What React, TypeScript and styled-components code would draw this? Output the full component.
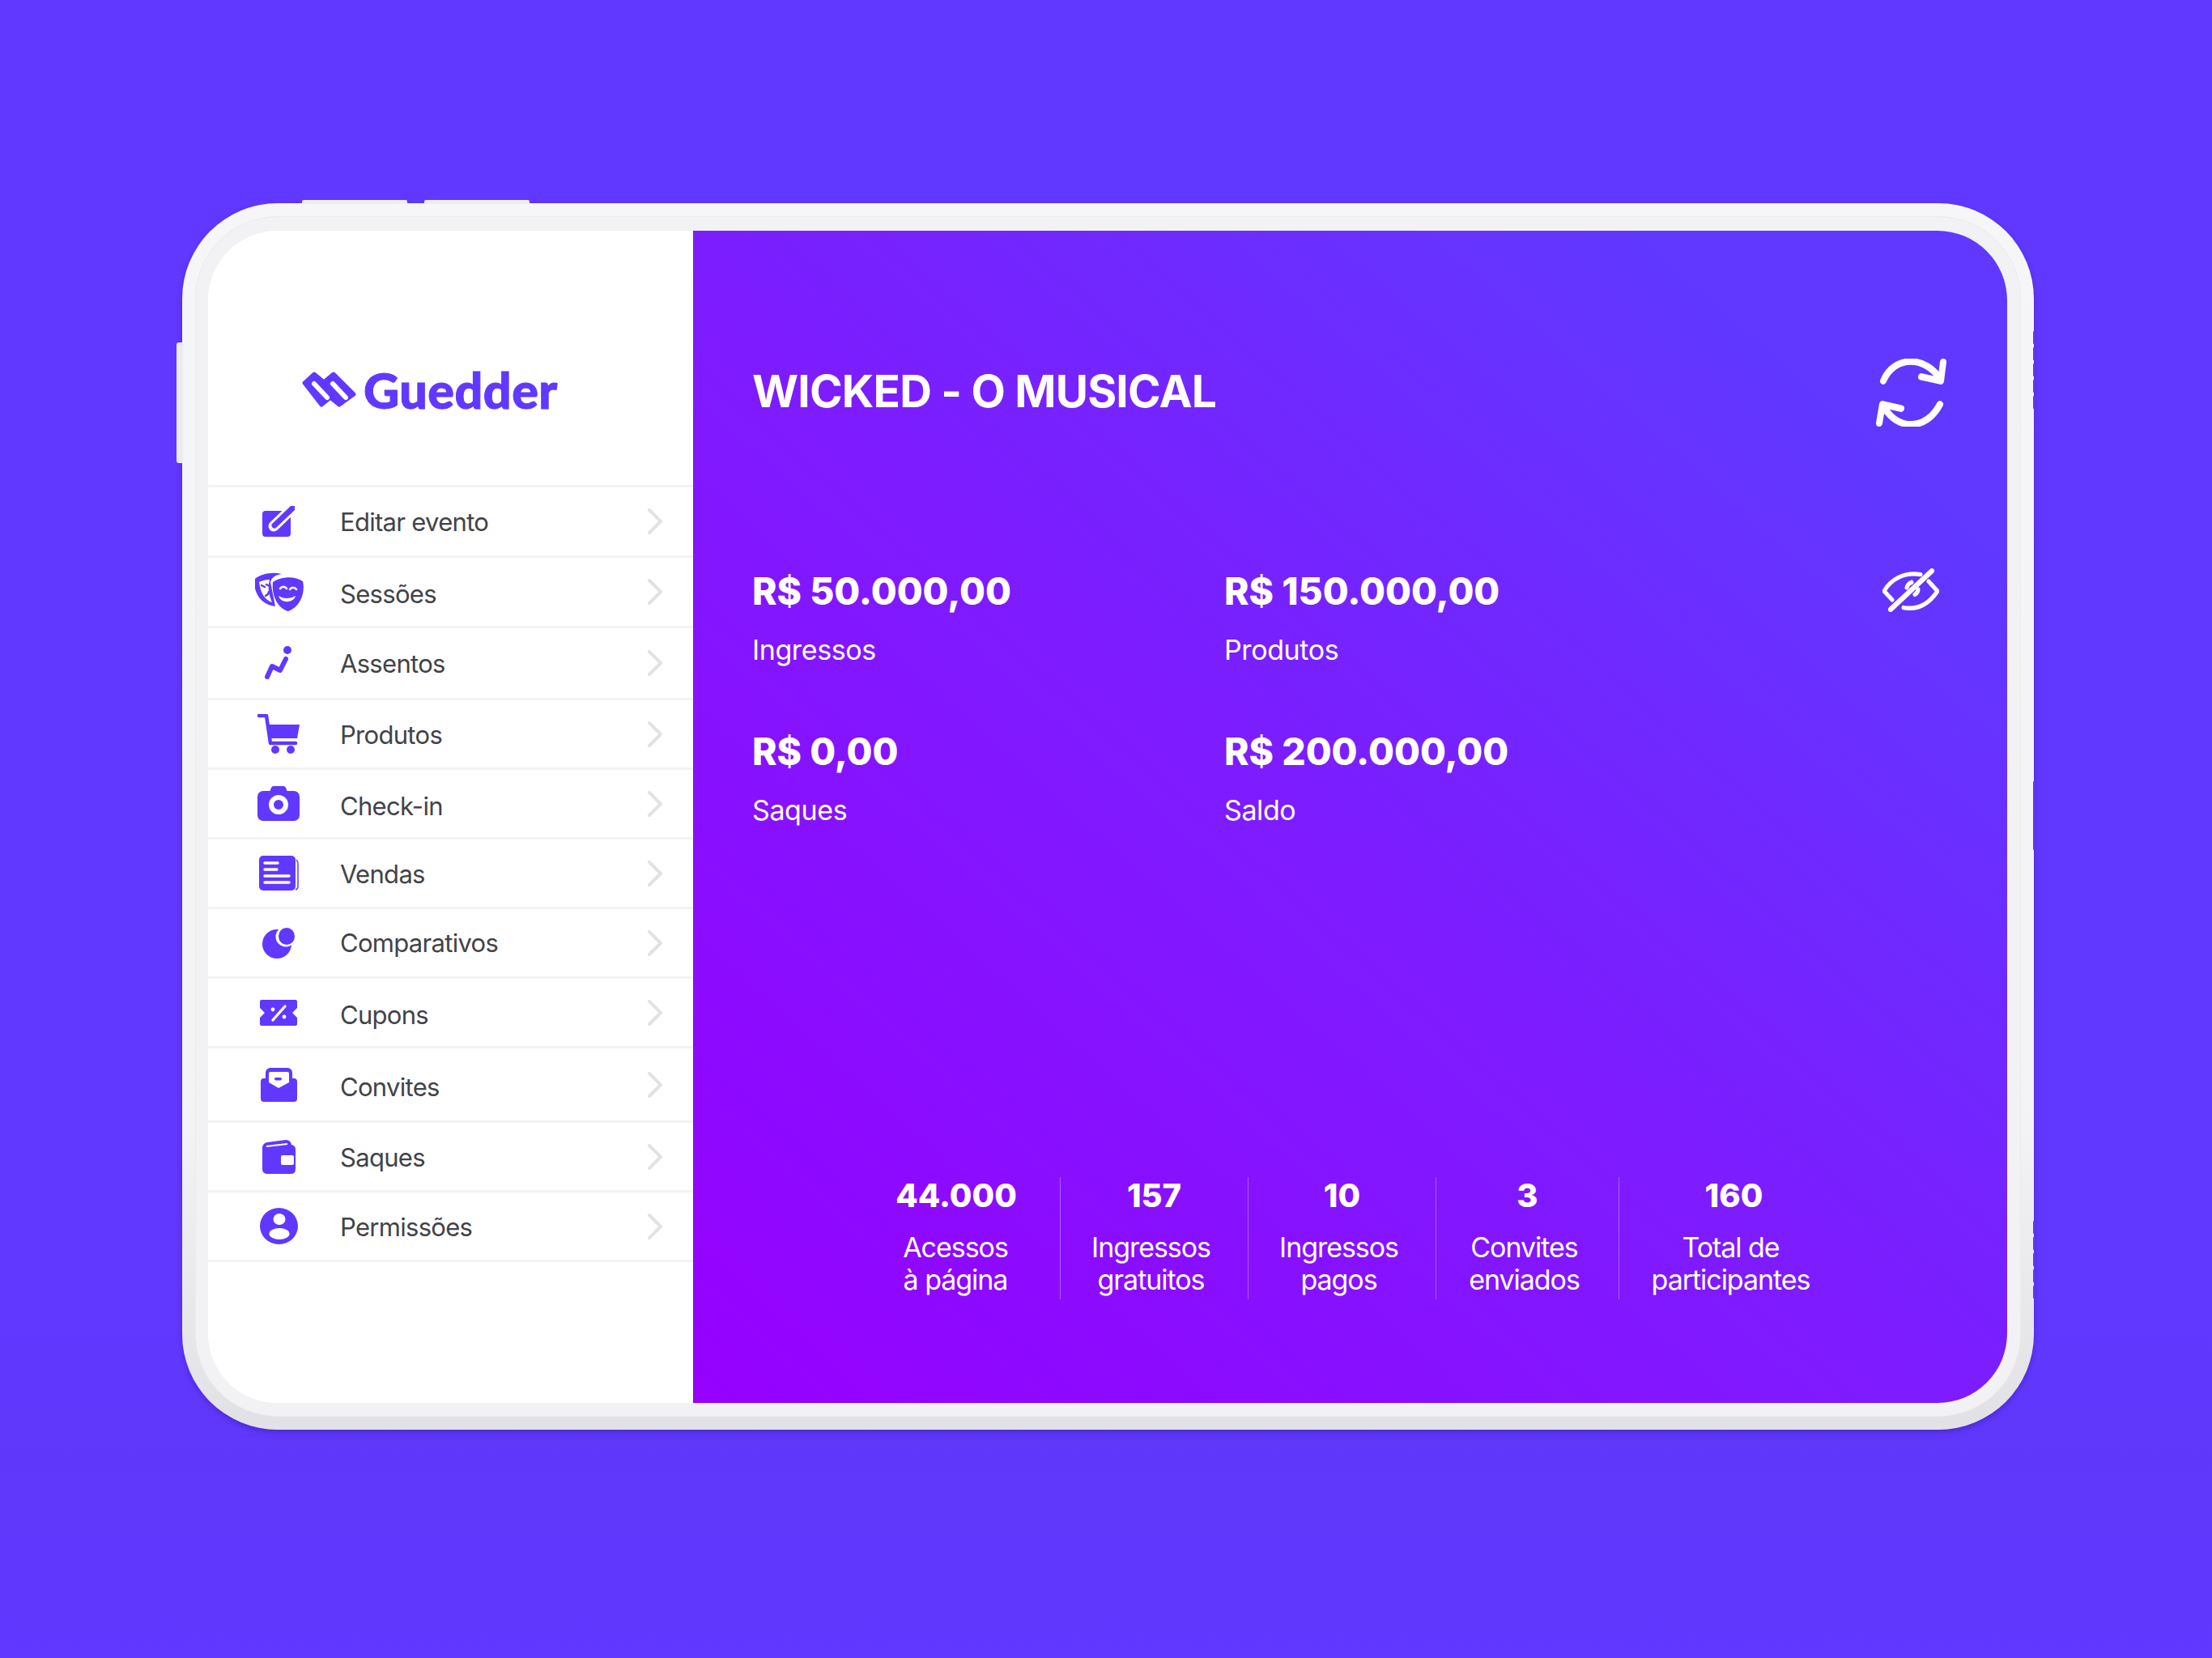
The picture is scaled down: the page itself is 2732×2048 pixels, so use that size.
import React from 'react';
import styled, { createGlobalStyle } from 'styled-components';

const PURPLE = '#6038ff';

const GlobalStyle = createGlobalStyle`
  html, body {
    margin: 0;
    background: ${PURPLE};
    font-family: Inter, "Liberation Sans", sans-serif;
  }
  * { box-sizing: border-box; }
`;

const Page = styled.div`
  width: 2732px;
  height: 2048px;
  padding: 251px 0 0 225px;
  background: linear-gradient(#6038ff 80%, #5e37fa 88%, #6038ff);
  overflow: hidden;
`;

const Device = styled.div`
  position: relative;
  width: 2287px;
  height: 1515px;
  padding: 34px 33px 33px 32px;
  border-radius: 118px;
  background: linear-gradient(#f6f6f8 0%, #f3f3f5 75%, #e2e2e6 99%);
  box-shadow: 0 3px 6px rgba(40, 20, 130, 0.35);

  &::before {
    content: '';
    position: absolute;
    inset: 16px;
    border-radius: 102px;
    background: #f2f2f4;
    border: 1px solid #ebebee;
  }
`;

const TopButton = styled.span<{ $left: number }>`
  position: absolute;
  top: -4px;
  left: ${(p) => p.$left}px;
  width: 130px;
  height: 5px;
  border-radius: 2px 2px 0 0;
  background: #eeeef1;
`;

const SideButton = styled.span`
  position: absolute;
  left: -7px;
  top: 172px;
  width: 8px;
  height: 149px;
  border-radius: 3px 0 0 3px;
  background: #ececef;
`;

const EdgeNotch = styled.span<{ $top: number; $h: number }>`
  position: absolute;
  right: -1px;
  top: ${(p) => p.$top}px;
  width: 2px;
  height: ${(p) => p.$h}px;
  border-radius: 1px;
  background: ${PURPLE};
`;

const Screen = styled.div`
  position: relative;
  display: grid;
  grid-template-columns: 599px 1fr;
  height: 100%;
  border-radius: 86px;
  overflow: hidden;
  background: #fff;
`;

const Sidebar = styled.aside`
  background: #fff;
`;

const LogoBar = styled.div`
  display: flex;
  align-items: center;
  gap: 8px;
  height: 314px;
  padding: 78px 0 0 116px;
`;

const LogoText = styled.span`
  font-family: Lato, Inter, sans-serif;
  font-size: 61px;
  font-weight: 900;
  line-height: 1;
  letter-spacing: 0.5px;
  color: ${PURPLE};
  -webkit-text-stroke: 1px ${PURPLE};
`;

const MenuList = styled.nav`
  display: flex;
  flex-direction: column;
  border-top: 3px solid #f3f3f5;
`;

const MenuRow = styled.div<{ $h: number }>`
  display: flex;
  align-items: center;
  height: ${(p) => p.$h}px;
  padding: 0 38px 0 42px;
  border-bottom: 3px solid #f3f3f5;
`;

const IconSlot = styled.span`
  display: flex;
  align-items: center;
  justify-content: center;
  width: 90px;
  margin-right: 31px;
`;

const MenuLabel = styled.span<{ $drop: number }>`
  margin-top: ${(p) => p.$drop}px;
  font-size: 31px;
  line-height: 40px;
  letter-spacing: -0.7px;
  color: #434347;
`;

const Chevron = styled.svg`
  margin-left: auto;
  fill: none;
  stroke: #e2e2e4;
  stroke-width: 4;
  stroke-linecap: round;
  stroke-linejoin: round;
`;

const Main = styled.main`
  display: flex;
  flex-direction: column;
  padding: 0 74px 128px 73px;
  color: #fff;
  background: linear-gradient(to top right, #9600ff 0%, #7d1cff 48%, #6038ff 86%);
`;

const Header = styled.header`
  display: flex;
  justify-content: space-between;
  align-items: flex-start;
  height: 415px;
  padding-top: 168px;
`;

const Title = styled.h1`
  margin: 0;
  font-size: 55px;
  font-weight: 700;
  line-height: 60px;
  letter-spacing: -0.8px;
`;

const LineIcon = styled.svg<{ $mt: number; $mr?: number }>`
  flex: none;
  margin-top: ${(p) => p.$mt}px;
  margin-right: ${(p) => p.$mr ?? 0}px;
  margin-left: auto;
  fill: none;
  stroke: #fff;
  stroke-linecap: round;
  stroke-linejoin: round;
`;

const BalanceRow = styled.div`
  display: flex;
  align-items: flex-start;
  margin-bottom: 75px;
`;

const BalanceCell = styled.div`
  width: 583px;
`;

const BalanceValue = styled.div`
  font-size: 46.2px;
  font-weight: 800;
  line-height: 60px;
  margin-bottom: 23px;
`;

const BalanceLabel = styled.div`
  font-size: 34px;
  line-height: 40px;
  letter-spacing: -0.4px;
`;

const Stats = styled.section`
  display: grid;
  grid-template-columns: 256px 232px 232px 226px 284px;
  margin: auto 0 0 124px;
`;

const StatCell = styled.div<{ $first?: boolean }>`
  height: 151px;
  text-align: center;
  border-left: ${(p) => (p.$first ? 'none' : '1px solid rgba(255, 255, 255, 0.32)')};
`;

const StatNumber = styled.div`
  font-size: 40px;
  font-weight: 800;
  line-height: 46px;
  margin-bottom: 21px;
`;

const StatLabel = styled.div<{ $first?: boolean }>`
  padding-right: ${(p) => (p.$first ? 2 : 8)}px;
  font-size: 34px;
  line-height: 40px;
  letter-spacing: -1.05px;
`;

const Glyph = styled.svg`
  display: block;
  fill: ${PURPLE};
`;

const W = '#fff';

const LogoMark = () => (
  <Glyph width="68" height="44" viewBox="0 0 68 44">
    <path
      d="M15 3 L27 13 L39 3 L64 28 L46 41 L35 32 L24 41 L3 14 Z"
      stroke={PURPLE}
      strokeWidth="5"
      strokeLinejoin="round"
    />
    <path d="M15 15 L31 32 M38 15 L54 32" stroke={W} strokeWidth="6" strokeLinecap="round" />
  </Glyph>
);

const EditIcon = () => (
  <Glyph width="40" height="38" viewBox="0 0 40 38">
    <rect x="0" y="6" width="35" height="32" rx="4" />
    <path d="M38 2 L14 25" stroke={W} strokeWidth="13" strokeLinecap="round" />
    <path d="M38 2 L15 24" stroke={PURPLE} strokeWidth="7" strokeLinecap="round" />
  </Glyph>
);

const MasksIcon = () => (
  <Glyph width="61" height="48" viewBox="0 0 61 48">
    <path d="M1 8 C8 2 22 -1 34 2 C26 3 22 6 20 12 L26 42 C12 40 4 32 1 20 Z" />
    <path d="M6 12 C10 10 14 9 19 9 L18 14 C17 22 19 30 22 37 C13 34 8 26 6 12 Z" fill={W} />
    <path
      d="M9 16 L13 18 M15 15 L19 17 M14 29 C16 28 18 26 18 24"
      stroke={PURPLE}
      strokeWidth="2.5"
      fill="none"
      strokeLinecap="round"
    />
    <path d="M23 12 C33 5 50 4 60 11 C63 24 58 42 42 48 C30 45 21 30 23 12 Z" />
    <path
      d="M32 20 C34 17 38 17 40 20 M44 21 C46 18 50 18 52 21"
      stroke={W}
      strokeWidth="2.6"
      fill="none"
      strokeLinecap="round"
    />
    <path d="M30 29 C36 33 44 33 51 29 C49 38 33 39 30 29 Z" fill={W} />
  </Glyph>
);

const SeatIcon = () => (
  <Glyph width="34" height="42" viewBox="0 0 34 42">
    <circle cx="28" cy="5" r="5" />
    <path
      d="M3 38 L9 25 L19 30 L26 16"
      fill="none"
      stroke={PURPLE}
      strokeWidth="6"
      strokeLinecap="round"
      strokeLinejoin="round"
    />
  </Glyph>
);

const CartIcon = () => (
  <Glyph width="52" height="49" viewBox="0 0 52 49">
    <path
      d="M2 2 H11 L16 36 H47"
      fill="none"
      stroke={PURPLE}
      strokeWidth="4.5"
      strokeLinecap="round"
      strokeLinejoin="round"
    />
    <path d="M13 13 H52 L49 30 H15 Z" />
    <circle cx="22" cy="44" r="5" />
    <circle cx="41" cy="44" r="5" />
  </Glyph>
);

const CameraIcon = () => (
  <Glyph width="52" height="43" viewBox="0 0 52 43">
    <rect x="0" y="6" width="52" height="37" rx="7" />
    <path d="M14 10 L17 2 Q18 0 20 0 H32 Q34 0 35 2 L38 10 Z" />
    <circle cx="26" cy="23" r="9" stroke={W} strokeWidth="6" />
  </Glyph>
);

const SalesIcon = () => (
  <Glyph width="49" height="43" viewBox="0 0 49 43">
    <rect x="0" y="0" width="45" height="43" rx="5" />
    <path d="M46 5 Q48 7 48 10 V38 Q48 41 45 42" fill="none" stroke={PURPLE} strokeWidth="1.5" />
    <path d="M7 9 H23 M7 17 H22 M7 25 H37 M7 33 H37" stroke={W} strokeWidth="3.4" strokeLinecap="round" />
  </Glyph>
);

const PieIcon = () => (
  <Glyph width="40" height="38" viewBox="0 0 40 38">
    <circle cx="18" cy="20" r="18" />
    <circle cx="29" cy="11" r="12.5" fill={W} />
    <ellipse cx="30" cy="10.5" rx="10" ry="10.5" />
  </Glyph>
);

const TicketIcon = () => (
  <Glyph width="46" height="32" viewBox="0 0 46 32">
    <path d="M2 0 H44 Q46 0 46 2 V10 L40 16 L46 22 V30 Q46 32 44 32 H2 Q0 32 0 30 V22 L6 16 L0 10 V2 Q0 0 2 0 Z" />
    <path d="M16 25 L31 8" stroke={W} strokeWidth="3.4" strokeLinecap="round" />
    <circle cx="16" cy="12" r="2.4" fill={W} />
    <circle cx="30" cy="21" r="2.4" fill={W} />
  </Glyph>
);

const InviteIcon = () => (
  <Glyph width="45" height="42" viewBox="0 0 45 42">
    <rect x="6" y="0" width="33" height="24" rx="6" />
    <rect x="0" y="13" width="45" height="29" rx="4" />
    <path d="M10 7 Q10 5 12 5 H33 Q35 5 35 7 V18 L22 25 L10 18 Z" fill={W} />
    <rect x="17" y="12" width="9" height="3.5" rx="1.7" />
  </Glyph>
);

const WalletIcon = () => (
  <Glyph width="41" height="42" viewBox="0 0 41 42">
    <path d="M0 9 Q1 4 6 3 L29 0 Q35 0 36 6 Q41 7 41 12 V36 Q41 42 35 42 H7 Q0 42 0 36 Z" />
    <path d="M5 8 L31 5" stroke={W} strokeWidth="1.8" />
    <rect x="23" y="19" width="16" height="12" rx="2" fill={W} />
  </Glyph>
);

const PersonIcon = () => (
  <Glyph width="47" height="45" viewBox="0 0 47 45">
    <ellipse cx="23.5" cy="22.5" rx="23.5" ry="22.5" />
    <ellipse cx="24" cy="14" rx="7.5" ry="7" fill={W} />
    <ellipse cx="24" cy="32" rx="12.5" ry="7" fill={W} />
  </Glyph>
);

const menu: { label: string; h: number; drop: number; icon: React.ReactNode }[] = [
  { label: 'Editar evento', h: 87, drop: 2, icon: <EditIcon /> },
  { label: 'Sessões', h: 87, drop: 5, icon: <MasksIcon /> },
  { label: 'Assentos', h: 89, drop: 2, icon: <SeatIcon /> },
  { label: 'Produtos', h: 86, drop: 2, icon: <CartIcon /> },
  { label: 'Check-in', h: 86, drop: 6, icon: <CameraIcon /> },
  { label: 'Vendas', h: 86, drop: 3, icon: <SalesIcon /> },
  { label: 'Comparativos', h: 86, drop: 1, icon: <PieIcon /> },
  { label: 'Cupons', h: 86, drop: 7, icon: <TicketIcon /> },
  { label: 'Convites', h: 92, drop: 7, icon: <InviteIcon /> },
  { label: 'Saques', h: 86, drop: 3, icon: <WalletIcon /> },
  { label: 'Permissões', h: 86, drop: 2, icon: <PersonIcon /> },
];

const stats = [
  { value: '44.000', top: 'Acessos', bottom: 'à página' },
  { value: '157', top: 'Ingressos', bottom: 'gratuitos' },
  { value: '10', top: 'Ingressos', bottom: 'pagos' },
  { value: '3', top: 'Convites', bottom: 'enviados' },
  { value: '160', top: 'Total de', bottom: 'participantes' },
];

const notches = [
  [158, 16], [178, 16], [198, 16], [218, 16], [238, 16],
  [714, 85],
  [1257, 16], [1277, 16], [1297, 16], [1317, 16], [1337, 16],
];

const App: React.FC = () => (
  <Page>
    <GlobalStyle />
    <Device>
      <TopButton $left={148} />
      <TopButton $left={299} />
      <SideButton />
      {notches.map(([top, h]) => (
        <EdgeNotch key={top} $top={top} $h={h} />
      ))}
      <Screen>
        <Sidebar>
          <LogoBar>
            <LogoMark />
            <LogoText>Guedder</LogoText>
          </LogoBar>
          <MenuList>
            {menu.map((item) => (
              <MenuRow key={item.label} $h={item.h}>
                <IconSlot>{item.icon}</IconSlot>
                <MenuLabel $drop={item.drop}>{item.label}</MenuLabel>
                <Chevron width="18" height="32" viewBox="0 0 18 32">
                  <path d="M2 2 L16 16 L2 30" />
                </Chevron>
              </MenuRow>
            ))}
          </MenuList>
        </Sidebar>
        <Main>
          <Header>
            <Title>WICKED - O MUSICAL</Title>
            <LineIcon
              $mt={-10}
              width="88"
              height="84"
              viewBox="0 0 88 79"
              preserveAspectRatio="none"
              strokeWidth="8"
            >
              <path d="M9 26 C22 -4 62 -4 80 25 M83 4 L80 26 L56 21" />
              <path d="M79 53 C62 84 26 84 9 55 M31 58 L8 53 L4 75" />
            </LineIcon>
          </Header>
          <BalanceRow>
            <BalanceCell>
              <BalanceValue>R$ 50.000,00</BalanceValue>
              <BalanceLabel>Ingressos</BalanceLabel>
            </BalanceCell>
            <BalanceCell>
              <BalanceValue>R$ 150.000,00</BalanceValue>
              <BalanceLabel>Produtos</BalanceLabel>
            </BalanceCell>
            <LineIcon
              $mt={2}
              $mr={10}
              width="70"
              height="54"
              viewBox="0 0 70 50"
              preserveAspectRatio="none"
              strokeWidth="5"
            >
              <path d="M12 36 L2 26 C10 13 26 4 47 7" />
              <path d="M57 15 L68 26 C58 40 44 48 26 45" />
              <path d="M30 22 C31 19 33 17 36 16 M40 30 C42 29 44 27 44 24" />
              <path d="M61 3 L10 47" strokeWidth="6" />
            </LineIcon>
          </BalanceRow>
          <BalanceRow>
            <BalanceCell>
              <BalanceValue>R$ 0,00</BalanceValue>
              <BalanceLabel>Saques</BalanceLabel>
            </BalanceCell>
            <BalanceCell>
              <BalanceValue>R$ 200.000,00</BalanceValue>
              <BalanceLabel>Saldo</BalanceLabel>
            </BalanceCell>
          </BalanceRow>
          <Stats>
            {stats.map((s, i) => (
              <StatCell key={s.value} $first={i === 0}>
                <StatNumber>{s.value}</StatNumber>
                <StatLabel $first={i === 0}>{s.top}</StatLabel>
                <StatLabel $first={i === 0}>{s.bottom}</StatLabel>
              </StatCell>
            ))}
          </Stats>
        </Main>
      </Screen>
    </Device>
  </Page>
);

export default App;
